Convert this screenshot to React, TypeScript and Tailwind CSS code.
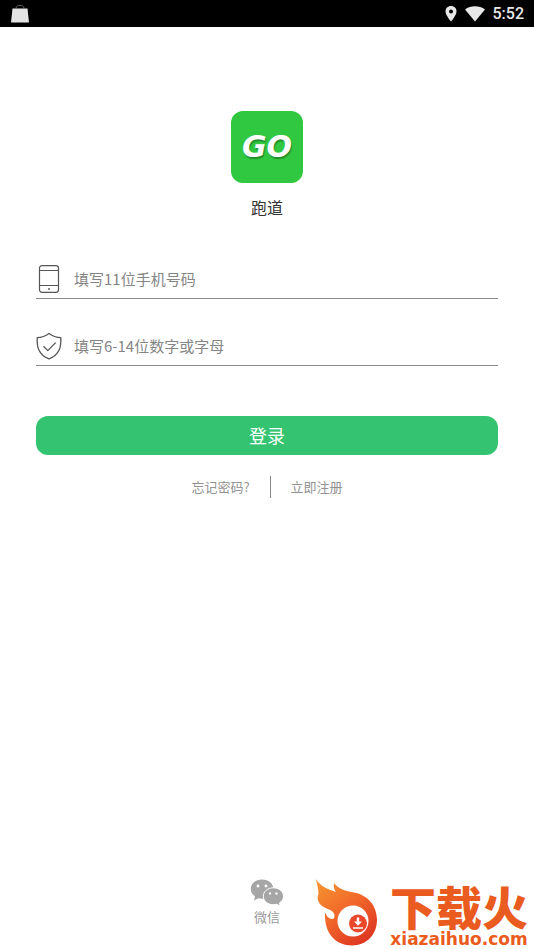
import React from "react";

function StatusBar() {
  return (
    <header className="flex h-[27px] items-center justify-between bg-black pr-[10px] pl-[11px] text-[#e8e8e8]">
      <svg className="h-[20px] w-[18px]" viewBox="0 0 18 20" aria-hidden="true">
        <path d="M1.500 4.500h15L18 18.500H0z" fill="#e4e4e4" />
        <path d="M5 4C5.500.5 12.500.5 13 4" fill="none" stroke="#666" strokeWidth="1" />
      </svg>
      <div className="flex items-center">
        <svg className="h-[16px] w-[12px]" viewBox="0 0 12 16" aria-hidden="true">
          <path d="M6 0C2.700 0 .5 2.400.5 5.400.5 9.200 6 15.500 6 15.500s5.500-6.300 5.500-10.100C11.500 2.400 9.300 0 6 0z" fill="#e8e8e8" />
          <circle cx="6" cy="5.500" r="2" fill="#000" />
        </svg>
        <svg className="ml-2 h-[16px] w-[20px]" viewBox="0 0 20 16" aria-hidden="true">
          <path d="M0 3.500C5.500-.8 14.500-.8 20 3.500L10 15.500z" fill="#e8e8e8" />
        </svg>
        <time className="ml-2 font-['Roboto',sans-serif] text-[16px] leading-[20px] font-medium">5:52</time>
      </div>
    </header>
  );
}

function PhoneIcon() {
  return (
    <svg className="h-[28px] w-[28px]" viewBox="0 0 28 28" fill="none" stroke="#555" strokeWidth="1.200" aria-hidden="true">
      <rect x="3.500" y=".7" width="19" height="26.600" rx="2.500" />
      <path d="M3.500 5.500h19M3.500 20.500h19" />
      <circle cx="13" cy="24" r=".9" fill="#555" stroke="none" />
    </svg>
  );
}

function ShieldIcon() {
  return (
    <svg className="h-[28px] w-[28px]" viewBox="0 0 28 28" fill="none" stroke="#555" strokeWidth="1.300" strokeLinejoin="round" aria-hidden="true">
      <path d="M13 1.500C9.700 4 6 5.500 1.200 5.600c-.4 9 1 17.200 11.800 21.300 10.800-4.100 12.200-12.300 11.800-21.300C20 5.500 16.300 4 13 1.500z" />
      <path d="M7.500 14.300l4.300 4.300 7.900-8" />
    </svg>
  );
}

type FieldProps = { id: string; label: string; type: string; icon: React.ReactNode };

function Field({ id, label, type, icon }: FieldProps) {
  return (
    <div className="flex h-[34px] items-start border-b border-[#8c8c8c]">
      <label htmlFor={id} aria-label={label} className="shrink-0">{icon}</label>
      <input
        id={id}
        type={type}
        placeholder={label}
        className="ml-[10px] h-[26px] min-w-0 flex-1 bg-transparent text-[15px] text-[#333] outline-none placeholder:text-[#858585]"
      />
    </div>
  );
}

function WeChatIcon() {
  return (
    <svg className="h-[28px] w-[34px]" viewBox="0 0 34 28" aria-hidden="true">
      <path d="M12 .5C5.500.5.800 4.500.8 10c0 3 1.600 5.600 4.200 7.300L4 21.500l4.300-2.300c1.200.3 2.400.5 3.700.5 6.500 0 11.400-4.200 11.400-9.700S18.500.5 12 .5z" fill="#a6a6a6" />
      <path d="M23.300 8.800c-5.700 0-10 3.700-10 8.400s4.300 8.500 10 8.500c1.200 0 2.400-.2 3.400-.5l3.700 2.100-.9-3.400c2.400-1.500 4-3.900 4-6.700 0-4.700-4.500-8.400-10.200-8.400z" fill="#a6a6a6" stroke="#fff" strokeWidth="1" />
      <g fill="#fff">
        <circle cx="8" cy="7" r="1.400" /><circle cx="16" cy="7" r="1.400" />
        <circle cx="20" cy="14.500" r="1.200" /><circle cx="26.500" cy="14.500" r="1.200" />
      </g>
    </svg>
  );
}

function FlameLogo() {
  return (
    <svg className="h-[68px] w-[62px] shrink-0" viewBox="0 0 62 68" aria-hidden="true">
      <defs>
        <linearGradient id="flame" x1="0" y1="0" x2=".7" y2="1">
          <stop offset="0" stopColor="#f7982f" />
          <stop offset=".5" stopColor="#f26a2b" />
          <stop offset="1" stopColor="#df3822" />
        </linearGradient>
      </defs>
      <path d="M0 0C4 7 11 10 20 13C17.500 10 17.500 7 18 4C22 10 30 12 38 13.500C52 16 61 27 61 41C61 55 51 66.500 36 66.500C20 66.500 8 55 9 33.500C11 38 14 41 18 39.500C19.500 36 18 32.500 13 30.500C3 27 0 21 2.500 15C2.500 9 .5 4 0 0z" fill="url(#flame)" />
      <circle cx="37" cy="42" r="15.500" fill="#fff" />
      <circle cx="42" cy="44.500" r="9" fill="#e9482a" />
      <path d="M42 38.500v5" stroke="#fff" strokeWidth="2.400" />
      <path d="M38 42.500h8l-4 4.300z" fill="#fff" />
      <path d="M37 49h10" stroke="#fff" strokeWidth="1.500" />
    </svg>
  );
}

function SiteMark() {
  return (
    <aside className="absolute right-[6px] bottom-[2px] flex items-start gap-3 text-[#ea5b20]">
      <FlameLogo />
      <div className="flex flex-col items-center">
        <span className="mt-1 text-[46px] leading-[44px] font-black">下载火</span>
        <span className="mt-[5px] font-['DejaVu_Sans',sans-serif] text-[17px] leading-[14px] font-bold">xiazaihuo.com</span>
      </div>
    </aside>
  );
}

export default function App() {
  return (
    <div className="relative flex min-h-screen flex-col bg-white font-['Noto_Sans_CJK_SC',sans-serif]">
      <StatusBar />
      <main className="flex flex-1 flex-col px-9 pt-[84px]">
        <div className="flex flex-col items-center">
          <div className="flex size-[72px] items-center justify-center rounded-xl bg-[#30c840]">
            <span className="font-['DejaVu_Sans',sans-serif] text-[30px] leading-[30px] font-bold text-white italic [text-shadow:1px_2px_1px_#238e2e]">GO</span>
          </div>
          <h1 className="mt-3 text-[16px] leading-[24px] text-[#333]">跑道</h1>
        </div>
        <form className="mt-[46px] flex flex-col" onSubmit={(e) => e.preventDefault()}>
          <div className="flex flex-col gap-[33px]">
            <Field id="phone" label="填写11位手机号码" type="tel" icon={<PhoneIcon />} />
            <Field id="password" label="填写6-14位数字或字母" type="password" icon={<ShieldIcon />} />
          </div>
          <button type="submit" className="mt-[50px] h-[39px] rounded-xl bg-[#34c471] pb-[2px] text-[18px] leading-[24px] text-white">登录</button>
        </form>
        <nav className="mt-[21px] flex items-center justify-center text-[13px] leading-[22px] text-[#929292]">
          <a href="#forgot" className="pr-5">忘记密码?</a>
          <span className="h-[22px] border-l border-[#888]" />
          <a href="#register" className="pl-5">立即注册</a>
        </nav>
      </main>
      <footer className="flex justify-center pb-[22px]">
        <button type="button" className="flex flex-col items-center text-[13px] leading-[20px] text-[#999]">
          <WeChatIcon />
          微信
        </button>
      </footer>
      <SiteMark />
    </div>
  );
}
